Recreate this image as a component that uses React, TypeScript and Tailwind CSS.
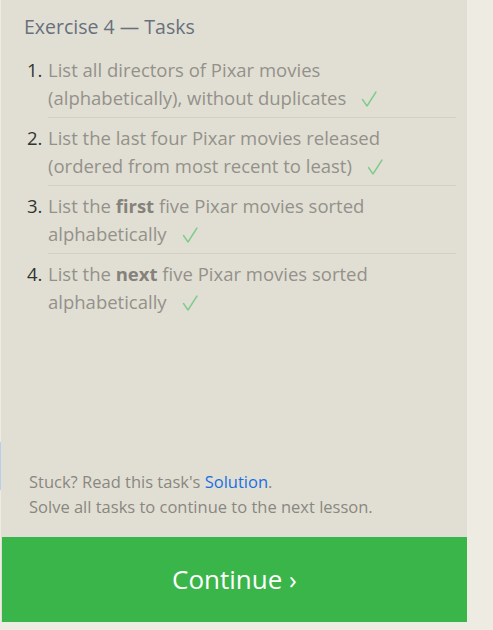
const tasks = [
  { id: 1, text: <>List all directors of Pixar movies (alphabetically), without duplicates</> },
  { id: 2, text: <>List the last four Pixar movies released (ordered from most recent to least)</> },
  { id: 3, text: <>List the <strong className="font-bold text-[#85827b]">first</strong> five Pixar movies sorted alphabetically</> },
  { id: 4, text: <>List the <strong className="font-bold text-[#85827b]">next</strong> five Pixar movies sorted alphabetically</> },
]

function Check() {
  return (
    <svg width="16" height="16" viewBox="0 0 16 16" className="ml-[15px] inline-block align-[-2px]">
      <path d="M1.5 8.5 L6 15 L15 1" fill="none" stroke="#7fcb8c" strokeWidth="1.4" strokeLinecap="round" strokeLinejoin="round" />
    </svg>
  )
}

export default function App() {
  return (
    <div className="relative min-h-[630px] bg-[#eeebe3] font-['Open_Sans',sans-serif]">
      {/* scrollbar sliver at the left edge */}
      <div className="absolute left-0 top-[442px] h-[48px] w-[1px] bg-[#b5cff0]" />
      <div className="ml-[1px] flex h-[622px] w-[466px] flex-col bg-[#e1dfd4]">
        <div className="flex-1 pl-[23px] pr-[11px] pt-[13px]">
          <h2 className="text-[19.5px] leading-[28px] text-[#68707c]">Exercise 4 — Tasks</h2>
          <ol className="mt-[15px]">
            {tasks.map((t, i) => (
              <li key={t.id} className="flex">
                <span className="w-[24px] shrink-0 pl-[3px] text-[18.5px] leading-[28px] text-[#333]">{t.id}.</span>
                <div className={`flex-1 ${i < tasks.length - 1 ? "mb-[6px] border-b border-[#d3d1c6] pb-[5px]" : ""}`}>
                  <p className="text-[18.5px] leading-[28px] text-[#94918a]">
                    {t.text}
                    <Check />
                  </p>
                </div>
              </li>
            ))}
          </ol>
        </div>
        <div className="px-[28px] pb-[18px] text-[16.5px] leading-[25px] text-[#8a8780]">
          <p>
            Stuck? Read this task's <a href="#" className="text-[#1a6fe0]">Solution</a>.
          </p>
          <p>Solve all tasks to continue to the next lesson.</p>
        </div>
        <button className="ml-[1px] h-[85px] bg-[#3ab54a] text-[26px] text-white">Continue ›</button>
      </div>
    </div>
  )
}
